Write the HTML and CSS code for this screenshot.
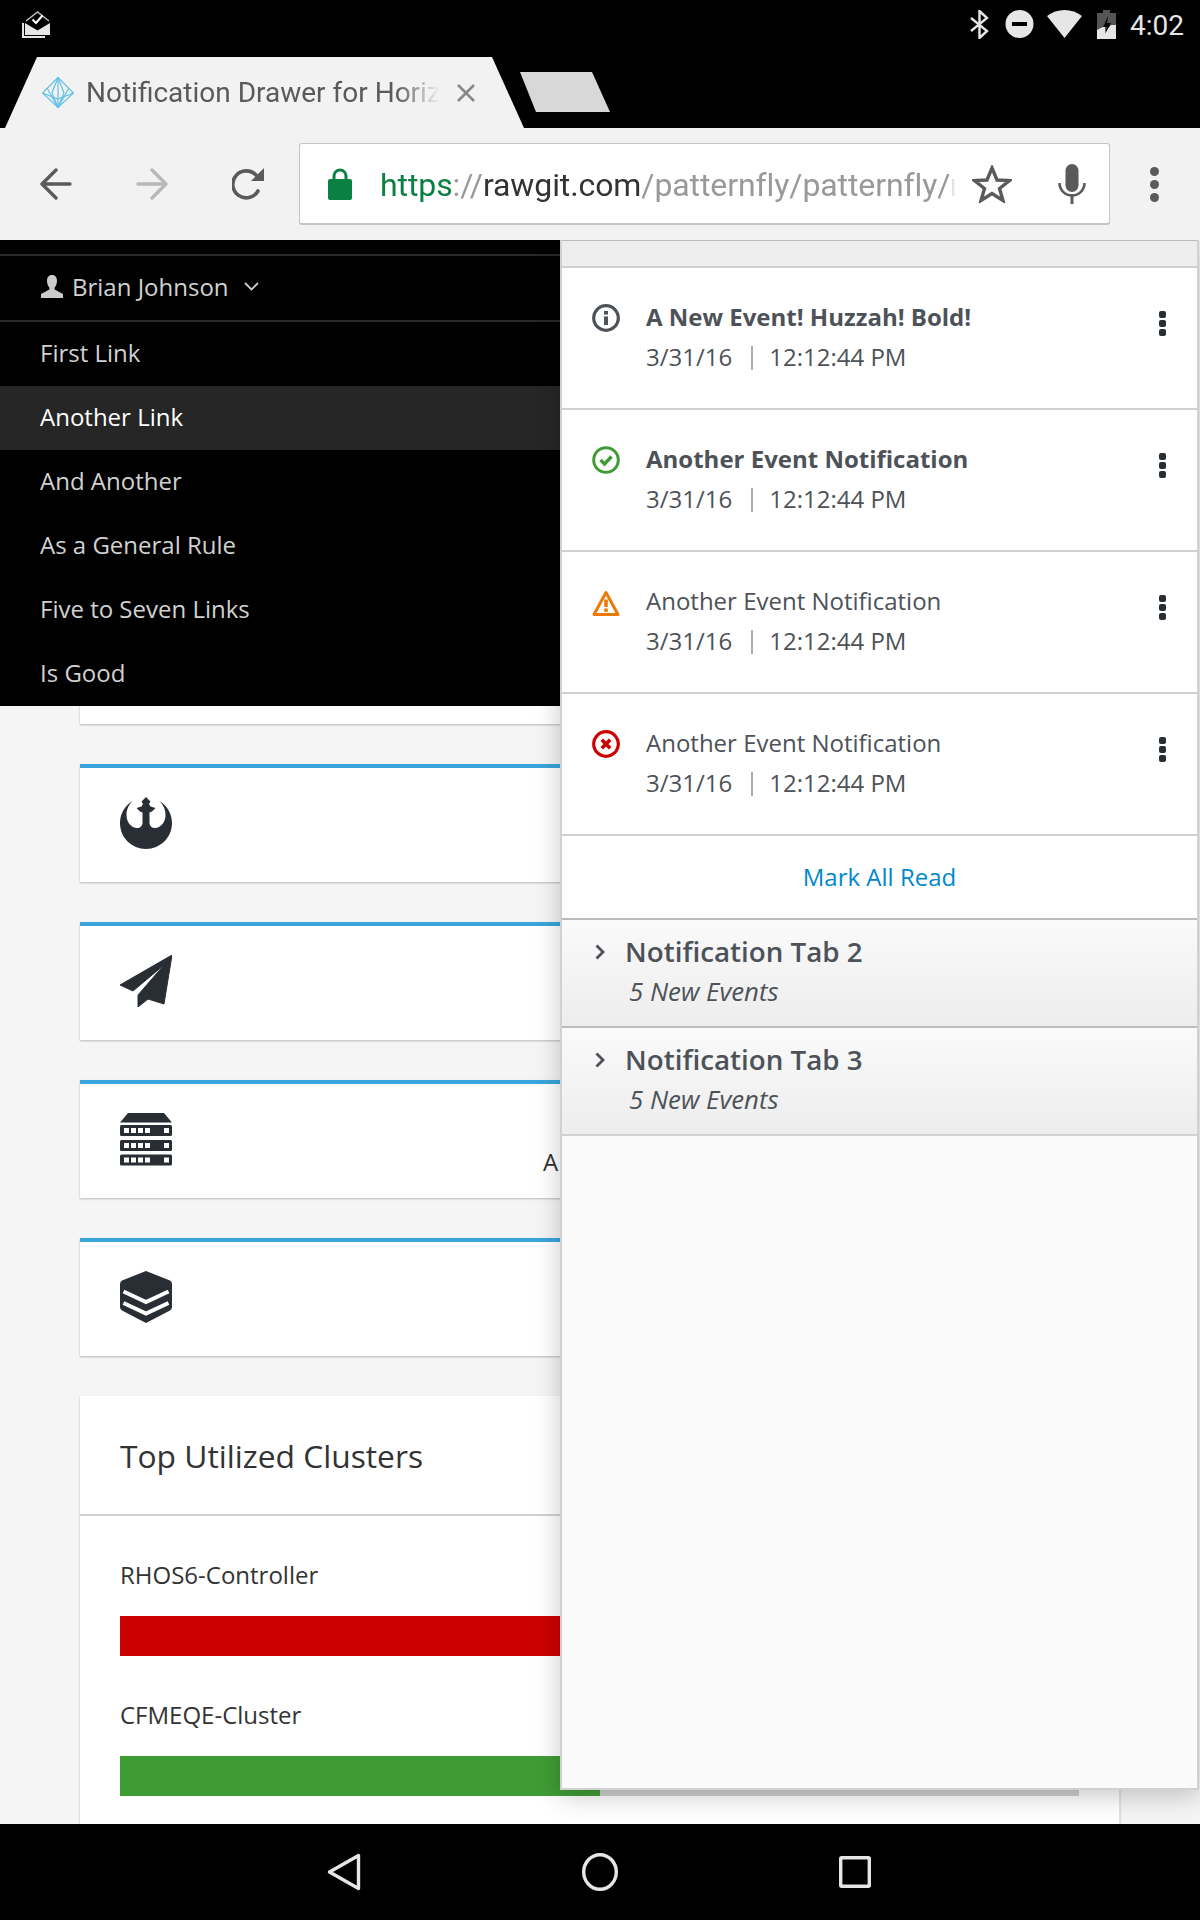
FILE: index.html
```html
<!DOCTYPE html>
<html lang="en">
<head>
    <meta charset="UTF-8">
    <meta name="viewport" content="width=device-width, initial-scale=1.0">
    <title>Notification Drawer for Horizontal Nav</title>
    <link rel="stylesheet" href="styles.css">
</head>
<body>
<div class="phone">

    <div class="top-black">
        <div class="status-bar">
            <svg class="status-inbox" width="28" height="27" viewBox="0 0 28 27">
                <path d="M0 12V27H23V25H2V12Z" fill="#e6e6e6"/>
                <path d="M3 12V24H28V12L15.5 19.5Z" fill="#e6e6e6"/>
                <path d="M4 10L15.5 1L27 10" fill="none" stroke="#bbb" stroke-width="1.5"/>
                <path d="M10.5 8.5L14 12L20.5 4.5" fill="none" stroke="#fff" stroke-width="2"/>
            </svg>
            <div class="status-right">
                <svg width="19" height="29" viewBox="0 0 19 29"><path d="M1 8L17 21L9.5 28V1L17 8L1 21" fill="none" stroke="#e6e6e6" stroke-width="2.4"/></svg>
                <svg width="29" height="28" viewBox="0 0 29 28"><circle cx="14.5" cy="14" r="14" fill="#e6e6e6"/><rect x="7" y="12" width="15" height="4" fill="#000"/></svg>
                <svg width="35" height="28" viewBox="0 0 35 28"><path d="M17.5 28L0 6C10 -2 25 -2 35 6Z" fill="#e6e6e6"/></svg>
                <svg width="19" height="29" viewBox="0 0 19 29"><path d="M6 0H13V3H19V29H0V3H6Z" fill="#555"/><path d="M0 20L8 16V22L14 15H19V29H0Z" fill="#e6e6e6"/><path d="M11 6L6 17H10L8 24L14 13H10Z" fill="#000"/></svg>
                <span class="status-time">4:02</span>
            </div>
        </div>
        <div class="tab-strip">
            <div class="tab">
                <svg class="tab-favicon" width="32" height="31" viewBox="0 0 32 31" fill="none" stroke="#62c0e6" stroke-width="1.2">
                    <path d="M16 0.5L31.5 16L16 30.5L0.5 16Z"/>
                    <path d="M5 11L16 30.5L27 11"/>
                    <path d="M16 0.5L10 16L16 30.5L22 16Z"/>
                    <path d="M16 0.5V30.5M0.5 16L16 22L31.5 16"/>
                </svg>
                <span class="tab-title">Notification Drawer for Horizontal Nav</span>
                <svg class="tab-close" width="20" height="20" viewBox="0 0 20 20"><path d="M2 2L18 18M18 2L2 18" stroke="#888" stroke-width="2.6"/></svg>
            </div>
            <div class="new-tab"></div>
        </div>
    </div>

    <div class="toolbar">
        <svg width="32" height="32" viewBox="0 0 32 32" fill="none" stroke="#5a5a5a" stroke-width="3.4" stroke-linecap="round" stroke-linejoin="round"><path d="M30 16H3M16 2L2 16L16 30"/></svg>
        <svg class="tool-forward" width="32" height="32" viewBox="0 0 32 32" fill="none" stroke="#b8b8b8" stroke-width="3.4" stroke-linecap="round" stroke-linejoin="round"><path d="M2 16H29M16 2L30 16L16 30"/></svg>
        <svg class="tool-reload" width="32" height="32" viewBox="0 0 32 32"><path d="M26 23A13.5 13.5 0 1 1 24 7" fill="none" stroke="#5a5a5a" stroke-width="3.6" stroke-linecap="round"/><path d="M32 0V13H19Z" fill="#5a5a5a"/></svg>
        <div class="url-box">
            <svg class="url-lock" width="24" height="32" viewBox="0 0 24 32"><path d="M6 13V8A6 6 0 0 1 18 8V13" fill="none" stroke="#0b8043" stroke-width="3"/><rect y="11" width="24" height="21" rx="2" fill="#0b8043"/></svg>
            <span class="url-text"><span class="url-scheme">https</span><span class="url-dim">://</span><span class="url-host">rawgit.com</span><span class="url-dim">/patternfly/patternfly/master/dist/tests</span></span>
            <svg class="url-star" width="40" height="38" viewBox="0 0 40 38"><path d="M20 3L25 15L37.5 15.5L27.5 23.5L31 35.5L20 28.5L9 35.5L12.5 23.5L2.5 15.5L15 15Z" fill="none" stroke="#5a5a5a" stroke-width="3.4" stroke-linejoin="miter"/></svg>
            <svg class="url-mic" width="28" height="40" viewBox="0 0 28 40"><rect x="7.5" y="0" width="13" height="28" rx="6.5" fill="#5a5a5a"/><path d="M1.5 19A12.5 12.5 0 0 0 26.5 19" fill="none" stroke="#5a5a5a" stroke-width="2.6"/><rect x="12.5" y="30" width="3" height="10" fill="#5a5a5a"/></svg>
        </div>
        <div class="tool-menu"><i></i><i></i><i></i></div>
    </div>

    <div class="viewport">
        <div class="page">
            <div class="card card-first"></div>

            <div class="card">
                <svg class="card-icon" width="52" height="52" viewBox="0 0 52 52"><path d="M12.5 4C4.5 9 0 17 0 26C0 40.4 11.6 52 26 52S52 40.4 52 26C52 17 47.5 9 39.5 4C44 9 45.5 13 45.5 18C45.5 25.5 40.5 31 35 31C31.5 31 30 29 29.5 26.5L29.5 15.5L32 14.5L35.5 11L30.5 9.5L29 7L30.5 4.5L26 0L21.5 4.5L23 7L21.5 9.5L16.5 11L20 14.5L22.5 15.5L22.5 26.5C22 29 20.5 31 17 31C11.5 31 6.5 25.5 6.5 18C6.5 13 8 9 12.5 4Z"/></svg>
            </div>

            <div class="card">
                <svg class="card-icon" width="52" height="52" viewBox="0 0 52 52"><path d="M52 0L0 30L13 36L44 10L18 40V52L28 44L44 49Z" stroke-linejoin="round" stroke="#292e34"/></svg>
            </div>

            <div class="card">
                <svg class="card-icon" width="52" height="53" viewBox="0 0 52 53">
                    <path d="M0 9.5L8 0H44L52 9.5Z"/>
                    <rect y="12" width="52" height="11" rx="1.5"/>
                    <rect y="27" width="52" height="11" rx="1.5"/>
                    <rect y="41.5" width="52" height="11" rx="1.5"/>
                    <g fill="#fff">
                        <rect x="4" y="15" width="5" height="5"/><rect x="11" y="15" width="5" height="5"/><rect x="18" y="15" width="5" height="5"/><rect x="25" y="15" width="5" height="5"/><rect x="44" y="15" width="5" height="5"/>
                        <rect x="4" y="30" width="5" height="5"/><rect x="11" y="30" width="5" height="5"/><rect x="18" y="30" width="5" height="5"/><rect x="25" y="30" width="5" height="5"/><rect x="44" y="30" width="5" height="5"/>
                        <rect x="4" y="44.5" width="5" height="5"/><rect x="11" y="44.5" width="5" height="5"/><rect x="18" y="44.5" width="5" height="5"/><rect x="25" y="44.5" width="5" height="5"/><rect x="44" y="44.5" width="5" height="5"/>
                    </g>
                </svg>
                <span class="card-clipped">A</span>
            </div>

            <div class="card">
                <svg class="card-icon" width="52" height="52" viewBox="0 0 52 52">
                    <path d="M26 0L50 9.5Q52 10.5 52 13V36Q52 38.5 50 39.5L26 52L2 39.5Q0 38.5 0 36V13Q0 10.5 2 9.5Z"/>
                    <path d="M3.5 20.5L26 31L48.5 20.5M3.5 32L26 42.5L48.5 32" fill="none" stroke="#fff" stroke-width="4"/>
                </svg>
            </div>

            <div class="cluster-card">
                <h2 class="cluster-head">Top Utilized Clusters</h2>
                <div class="cluster-body">
                    <div class="cluster-name">RHOS6-Controller</div>
                    <div class="bar"><div class="bar-fill bar-red" style="width: 100%"></div></div>
                    <div class="cluster-name">CFMEQE-Cluster</div>
                    <div class="bar"><div class="bar-fill bar-green" style="width: 50%"></div></div>
                </div>
            </div>
        </div>

        <div class="nav-menu">
            <div class="nav-user">
                <svg width="22" height="23" viewBox="0 0 22 23"><path d="M11 0C14.5 0 16 2.5 16 6C16 9 14.6 11.5 13.6 12.6V14.5L22 19V23H0V19L8.4 14.5V12.6C7.4 11.5 6 9 6 6C6 2.5 7.5 0 11 0Z" fill="#ccc"/></svg>
                <span>Brian Johnson</span>
                <svg class="nav-caret" width="15" height="9" viewBox="0 0 15 9"><path d="M1 1L7.5 7.5L14 1" fill="none" stroke="#ccc" stroke-width="1.8"/></svg>
            </div>
            <a class="nav-link">First Link</a>
            <a class="nav-link nav-active">Another Link</a>
            <a class="nav-link">And Another</a>
            <a class="nav-link">As a General Rule</a>
            <a class="nav-link">Five to Seven Links</a>
            <a class="nav-link">Is Good</a>
        </div>

        <div class="drawer">
            <div class="drawer-head"><span class="drawer-head-sub">5 New Events</span></div>

            <div class="note">
                <svg class="note-icon" width="28" height="28" viewBox="0 0 28 28"><circle cx="14" cy="14" r="12.3" fill="none" stroke="#4d5258" stroke-width="3.2"/><rect x="12" y="7" width="4" height="3.6" fill="#4d5258"/><rect x="12" y="12.4" width="4" height="8.6" fill="#4d5258"/></svg>
                <div class="note-body">
                    <div class="note-title note-bold">A New Event! Huzzah! Bold!</div>
                    <div class="note-date">3/31/16<i class="note-sep"></i>12:12:44 PM</div>
                </div>
                <div class="kebab"><i></i><i></i><i></i></div>
            </div>

            <div class="note">
                <svg class="note-icon" width="28" height="28" viewBox="0 0 28 28"><circle cx="14" cy="14" r="12.3" fill="none" stroke="#3f9c35" stroke-width="3"/><path d="M8.5 14L12.5 18L19.5 10.5" fill="none" stroke="#3f9c35" stroke-width="3.4"/></svg>
                <div class="note-body">
                    <div class="note-title note-bold">Another Event Notification</div>
                    <div class="note-date">3/31/16<i class="note-sep"></i>12:12:44 PM</div>
                </div>
                <div class="kebab"><i></i><i></i><i></i></div>
            </div>

            <div class="note">
                <svg class="note-icon note-warn" width="28" height="26" viewBox="0 0 28 26"><path d="M14 2.5L26 24.5H2Z" fill="none" stroke="#ec7a08" stroke-width="3" stroke-linejoin="round"/><rect x="12.2" y="9.5" width="3.6" height="7.5" fill="#ec7a08"/><rect x="12.2" y="18.5" width="3.6" height="3.4" fill="#ec7a08"/></svg>
                <div class="note-body">
                    <div class="note-title">Another Event Notification</div>
                    <div class="note-date">3/31/16<i class="note-sep"></i>12:12:44 PM</div>
                </div>
                <div class="kebab"><i></i><i></i><i></i></div>
            </div>

            <div class="note">
                <svg class="note-icon" width="28" height="28" viewBox="0 0 28 28"><circle cx="14" cy="14" r="12.3" fill="none" stroke="#cc0000" stroke-width="3.2"/><path d="M9.8 9.8L18.2 18.2M18.2 9.8L9.8 18.2" stroke="#cc0000" stroke-width="3.6"/></svg>
                <div class="note-body">
                    <div class="note-title">Another Event Notification</div>
                    <div class="note-date">3/31/16<i class="note-sep"></i>12:12:44 PM</div>
                </div>
                <div class="kebab"><i></i><i></i><i></i></div>
            </div>

            <div class="mark-read"><a>Mark All Read</a></div>

            <div class="drawer-tab">
                <div class="drawer-tab-title">
                    <svg width="10" height="16" viewBox="0 0 10 16"><path d="M1.5 1.5L8 8L1.5 14.5" fill="none" stroke="#4d5258" stroke-width="2.8"/></svg>
                    Notification Tab 2
                </div>
                <div class="drawer-tab-sub">5 New Events</div>
            </div>
            <div class="drawer-tab drawer-tab-last">
                <div class="drawer-tab-title">
                    <svg width="10" height="16" viewBox="0 0 10 16"><path d="M1.5 1.5L8 8L1.5 14.5" fill="none" stroke="#4d5258" stroke-width="2.8"/></svg>
                    Notification Tab 3
                </div>
                <div class="drawer-tab-sub">5 New Events</div>
            </div>
        </div>
    </div>

    <div class="android-nav">
        <svg width="34" height="38" viewBox="0 0 34 38"><path d="M31.5 2.5V35.5L2.5 19Z" fill="none" stroke="#e6e6e6" stroke-width="3.4" stroke-linejoin="round"/></svg>
        <svg width="36" height="38" viewBox="0 0 36 38"><ellipse cx="18" cy="19" rx="16.3" ry="17.3" fill="none" stroke="#e6e6e6" stroke-width="3.4"/></svg>
        <svg width="32" height="32" viewBox="0 0 32 32"><rect x="1.7" y="1.7" width="28.6" height="28.6" rx="1" fill="none" stroke="#e6e6e6" stroke-width="3.4"/></svg>
    </div>
</div>
</body>
</html>
```

FILE: styles.css
```css
* {
    box-sizing: border-box;
}

body {
    margin: 0;
    background-color: #000;
    font-family: "Open Sans", "Liberation Sans", sans-serif;
}

.phone {
    display: flex;
    flex-direction: column;
    width: 1200px;
    height: 1920px;
    overflow: hidden;
}

/* android status bar and chrome tabs */
.top-black {
    height: 128px;
    background-color: #000;
}
.status-bar {
    display: flex;
    justify-content: space-between;
    height: 57px;
    padding: 10px 16px 0 22px;
}
.status-inbox {
    margin-top: 1px;
}
.status-right {
    display: flex;
    align-items: flex-start;
}
.status-right svg:nth-child(2) {
    margin-left: 16px;
}
.status-right svg:nth-child(3) {
    margin-left: 13px;
}
.status-right svg:nth-child(4) {
    margin-left: 15px;
}
.status-time {
    margin-left: 14px;
    font-family: Roboto, sans-serif;
    font-size: 28px;
    line-height: 32px;
    color: #e6e6e6;
}

.tab-strip {
    display: flex;
    height: 71px;
}
.tab {
    display: flex;
    align-items: center;
    width: 524px;
    height: 71px;
    padding: 0 0 0 42px;
    background-color: #f2f2f2;
    clip-path: polygon(5px 100%, 37px 0, 492px 0, 524px 100%);
}
.tab-favicon {
    flex: none;
}
.tab-title {
    width: 353px;
    margin-left: 12px;
    overflow: hidden;
    white-space: nowrap;
    font-family: Roboto, sans-serif;
    font-size: 28px;
    color: #5a5a5a;
    -webkit-mask-image: linear-gradient(to right, #000 88%, transparent 100%);
    mask-image: linear-gradient(to right, #000 88%, transparent 100%);
}
.tab-close {
    flex: none;
    margin-left: 17px;
}
.new-tab {
    width: 90px;
    height: 40px;
    margin: 15px 0 0 -4px;
    background-color: #d8d8d8;
    clip-path: polygon(0 0, 72px 0, 90px 100%, 16px 100%);
}

/* chrome address bar */
.toolbar {
    display: flex;
    align-items: center;
    height: 112px;
    padding: 0 0 0 40px;
    background-color: #f2f2f2;
}
.tool-forward {
    margin-left: 64px;
}
.tool-reload {
    margin-left: 64px;
}
.url-box {
    display: flex;
    align-items: center;
    width: 811px;
    height: 82px;
    margin-left: 35px;
    padding-left: 28px;
    background-color: #fff;
    border: 1px solid #c4c4c4;
    border-bottom-width: 2px;
    border-radius: 3px;
}
.url-lock {
    flex: none;
}
.url-text {
    width: 575px;
    margin-left: 28px;
    padding-top: 2px;
    overflow: hidden;
    white-space: nowrap;
    font-family: Roboto, sans-serif;
    font-size: 32px;
    letter-spacing: -0.1px;
    color: #333;
    -webkit-mask-image: linear-gradient(to right, #000 99%, transparent 100%);
    mask-image: linear-gradient(to right, #000 99%, transparent 100%);
}
.url-scheme {
    color: #0b8043;
}
.url-dim {
    color: #999;
}
.url-star {
    flex: none;
    margin-left: 17px;
}
.url-mic {
    flex: none;
    margin-left: 46px;
}
.tool-menu {
    display: flex;
    flex-direction: column;
    gap: 4px;
    margin-left: 40px;
}
.tool-menu i {
    display: block;
    width: 9px;
    height: 9px;
    border-radius: 50%;
    background-color: #5a5a5a;
}

/* the page behind the drawer */
.viewport {
    position: relative;
    flex: none;
    height: 1584px;
    overflow: hidden;
    background-color: #f5f5f5;
}
.page {
    width: 1120px;
    padding-left: 80px;
}
.card {
    display: flex;
    height: 118px;
    margin-bottom: 40px;
    padding: 29px 0 0 40px;
    background-color: #fff;
    border-top: 4px solid #39a5dc;
    box-shadow: 0 1px 2px rgba(0, 0, 0, .25);
}
.card-first {
    height: 484px;
    border-top: 0;
}
.card-icon {
    flex: none;
    fill: #292e34;
}
.card-clipped {
    margin: 33px 0 0 371px;
    font-size: 24px;
    line-height: 32px;
    color: #333;
}

.cluster-card {
    height: 520px;
    background-color: #fff;
    border-right: 1px solid #e2e2e2;
    box-shadow: 0 1px 2px rgba(0, 0, 0, .25);
}
.cluster-head {
    height: 120px;
    margin: 0;
    padding: 0 0 0 40px;
    font-size: 31.75px;
    font-weight: 400;
    line-height: 120px;
    color: #333;
    border-bottom: 2px solid #d1d1d1;
}
.cluster-body {
    padding: 39px 40px 0;
}
.cluster-name {
    height: 40px;
    font-size: 24px;
    line-height: 40px;
    color: #333;
}
.bar {
    height: 40px;
    margin: 21px 0 39px;
    background-color: #d1d1d1;
}
.bar-fill {
    height: 100%;
}
.bar-red {
    background-color: #cc0000;
}
.bar-green {
    background-color: #3f9c35;
}

/* mobile menu */
.nav-menu {
    position: absolute;
    top: 0;
    left: 0;
    width: 560px;
    height: 466px;
    padding-top: 14px;
    background-color: #000;
}
.nav-user {
    display: flex;
    align-items: center;
    height: 68px;
    padding-bottom: 4px;
    padding-left: 41px;
    font-size: 24px;
    color: #d1d1d1;
    border-top: 2px solid #292929;
    border-bottom: 2px solid #292929;
}
.nav-user span {
    margin-left: 9px;
}
.nav-caret {
    margin-left: 15px;
}
.nav-link {
    display: block;
    height: 64px;
    padding-left: 40px;
    font-size: 24px;
    line-height: 62px;
    color: #d1d1d1;
}
.nav-active {
    background-color: #262626;
    color: #fff;
}

/* notification drawer */
.drawer {
    position: absolute;
    top: 0;
    left: 560px;
    width: 639px;
    height: 1550px;
    background-color: #fafafa;
    border: 2px solid #d1d1d1;
    border-top: 0;
    box-shadow: 0 6px 24px rgba(0, 0, 0, .22);
    color: #4d5258;
}
.drawer-head {
    height: 28px;
    overflow: hidden;
    background-color: #eee;
    border-top: 1px solid #bbb;
    border-bottom: 2px solid #d1d1d1;
}
.drawer-head-sub {
    display: block;
    margin: -29px 0 0 68px;
    font-size: 26px;
    font-style: italic;
    line-height: 32px;
    color: #4d5258;
}
.note {
    display: flex;
    align-items: flex-start;
    height: 142px;
    padding: 29px 0 0 30px;
    background-color: #fff;
    border-bottom: 2px solid #d1d1d1;
}
.note-icon {
    flex: none;
    margin-top: 7px;
}
.note-warn {
    margin-top: 9px;
}
.note-body {
    flex: 1;
    margin-left: 26px;
}
.note-title,
.note-date {
    font-size: 24px;
    line-height: 40px;
}
.note-bold {
    font-weight: 700;
}
.note-sep {
    display: inline-block;
    width: 2px;
    height: 24px;
    margin: 0 16px 0 19px;
    vertical-align: -4px;
    background-color: #aaa;
}
.kebab {
    display: flex;
    flex-direction: column;
    gap: 2px;
    margin: 14px 31px 0 0;
}
.kebab i {
    display: block;
    width: 7px;
    height: 7px;
    border-radius: 2px;
    background-color: #292e34;
}
.mark-read {
    height: 84px;
    background-color: #fff;
    border-bottom: 2px solid #bbb;
    font-size: 24px;
    line-height: 82px;
    text-align: center;
    color: #0088ce;
}
.drawer-tab {
    height: 108px;
    padding-top: 11px;
    background: linear-gradient(to bottom, #fafafa, #ededed);
    border-bottom: 2px solid #bbb;
}
.drawer-tab-last {
    border-bottom-color: #d1d1d1;
}
.drawer-tab-title {
    display: flex;
    align-items: center;
    gap: 20px;
    padding-left: 33px;
    font-size: 27.75px;
    font-weight: 600;
    line-height: 40px;
}
.drawer-tab-title svg {
    margin-top: 2px;
}
.drawer-tab-sub {
    padding-left: 67px;
    font-size: 25.8px;
    font-style: italic;
    line-height: 40px;
}

/* android nav */
.android-nav {
    display: flex;
    align-items: center;
    height: 96px;
    padding: 0 0 0 327px;
    gap: 221px;
    background-color: #000;
}
```
